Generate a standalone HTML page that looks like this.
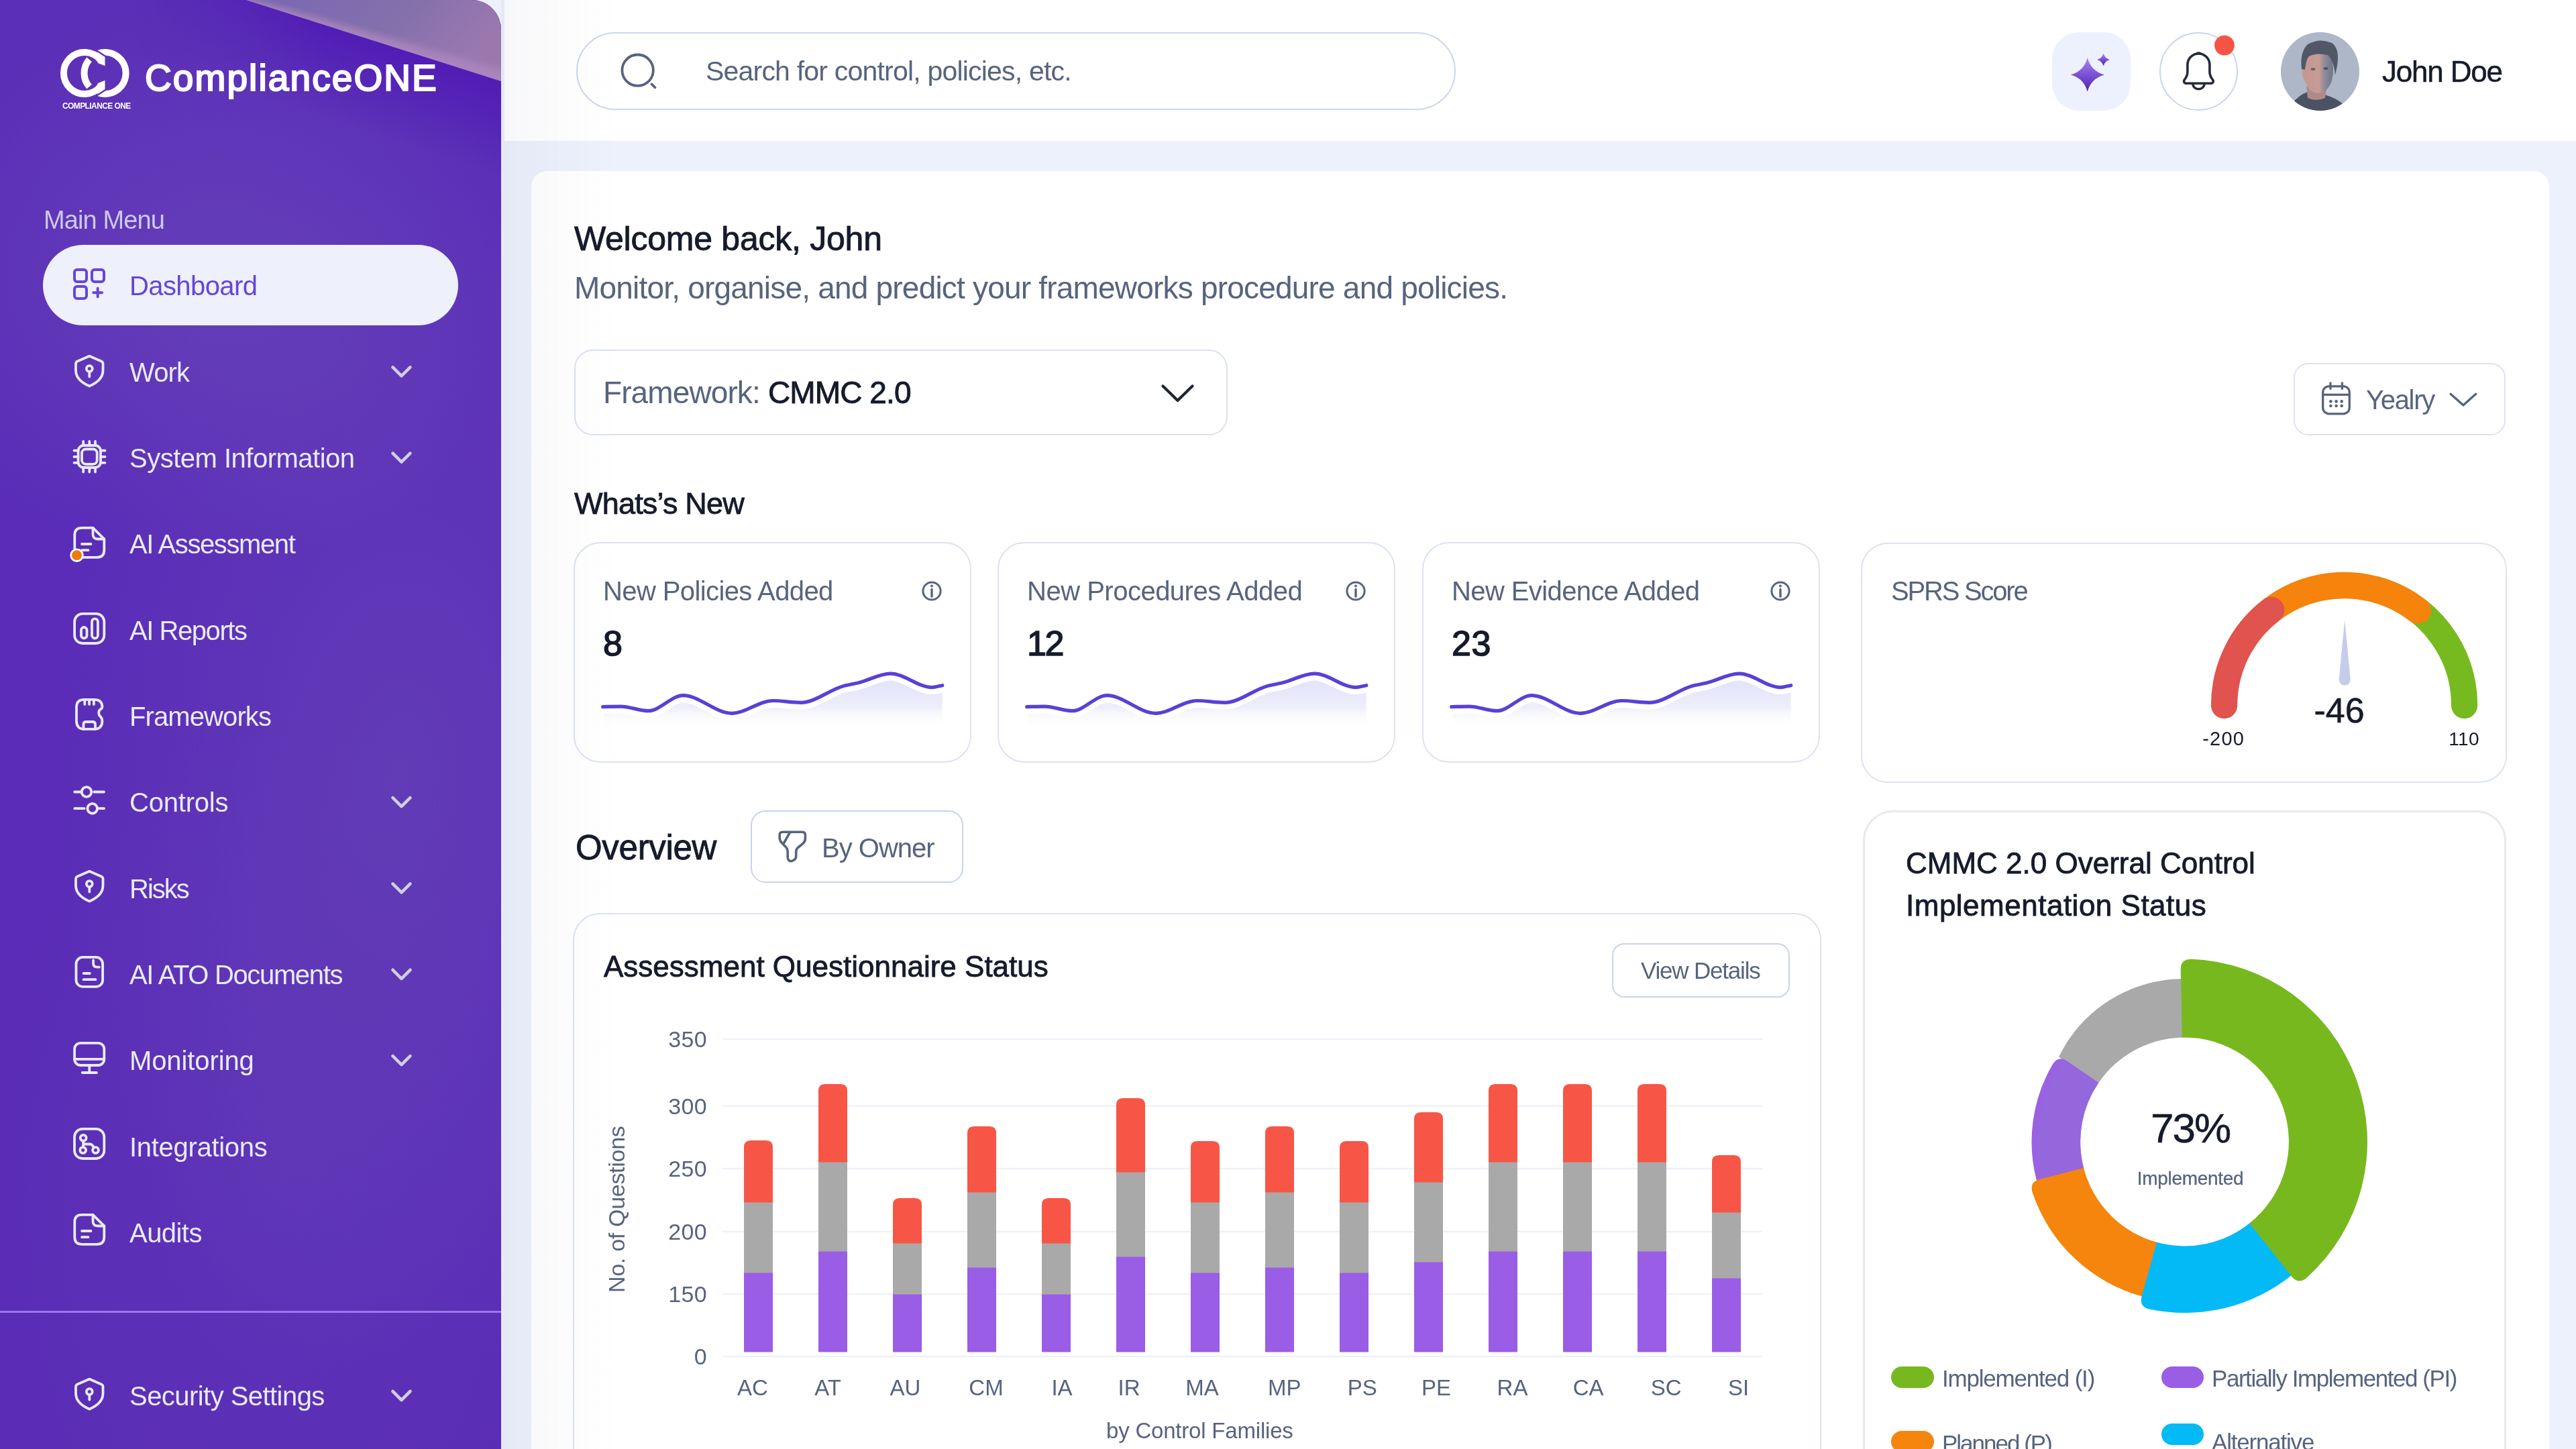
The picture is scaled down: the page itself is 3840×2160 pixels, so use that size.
<!DOCTYPE html>
<html><head><meta charset="utf-8"><title>ComplianceONE Dashboard</title>
<style>
html,body{margin:0;padding:0;}
body{width:3840px;height:2160px;overflow:hidden;position:relative;background:#EDF1FC;font-family:"Liberation Sans",sans-serif;}
.t{position:absolute;line-height:1;white-space:nowrap;font-family:"Liberation Sans",sans-serif;}
svg{font-family:"Liberation Sans",sans-serif;}
</style></head><body>
<div style="position:absolute;left:0;top:0;width:3840px;height:2160px;will-change:transform;">
<div style="position:absolute;left:752px;top:0px;width:3088px;height:210px;background:#FFFFFF;border-bottom:2.5px solid #F0F1F6;"></div>
<div style="position:absolute;left:859px;top:48px;width:1311px;height:116px;box-sizing:border-box;border:2.5px solid #CED6EC;border-radius:58px;background:#fff;"></div>
<svg style="position:absolute;left:0px;top:0px;overflow:visible;" width="3840" height="2160" viewBox="0 0 3840 2160"><circle cx="950.6" cy="104.7" r="23.2" fill="none" stroke="#57647E" stroke-width="3.8"/><path d="M971.5 125.5 L976.5 130.5" stroke="#57647E" stroke-width="3.8" stroke-linecap="round"/></svg>
<div class="t" style="left:1052.0px;top:86.3px;font-size:41px;color:#57647E;letter-spacing:-0.8px;">Search for control, policies, etc.</div>
<div style="position:absolute;left:3059px;top:48px;width:117px;height:117px;background:#EDF1FD;border-radius:40px;"></div>
<svg style="position:absolute;left:0px;top:0px;overflow:visible;" width="3840" height="2160" viewBox="0 0 3840 2160"><defs><linearGradient id="stg" x1="0" y1="0" x2="0" y2="1"><stop offset="0" stop-color="#A985F0"/><stop offset="0.45" stop-color="#7E57DA"/><stop offset="1" stop-color="#5420AE"/></linearGradient></defs>
<path d="M3111.7 86 Q3117 106 3137.3 111.6 Q3117 117 3111.7 136.7 Q3106.5 117 3086.7 111.6 Q3106.5 106 3111.7 86 Z" fill="url(#stg)"/>
<path d="M3135.6 79.6 Q3137.6 87 3145 88.9 Q3137.6 91 3135.6 98.2 Q3133.6 91 3126 88.9 Q3133.6 87 3135.6 79.6 Z" fill="url(#stg)"/></svg>
<div style="position:absolute;left:3219px;top:48px;width:117px;height:117px;box-sizing:border-box;border:2.5px solid #CAD4EC;border-radius:50%;background:#fff;"></div>
<svg style="position:absolute;left:0px;top:0px;overflow:visible;" width="3840" height="2160" viewBox="0 0 3840 2160"><g transform="translate(3277.4 77)" fill="none" stroke="#262B38" stroke-width="3.6" stroke-linejoin="round" stroke-linecap="round"><path d="M -16.5 19.5 A 16.5 16.5 0 0 1 16.5 19.5 L 16.5 30 C 16.5 35.5 18 38 20.8 41.5 C 23 44.5 21.5 47.3 17.5 47.3 L -17.5 47.3 C -21.5 47.3 -23 44.5 -20.8 41.5 C -18 38 -16.5 35.5 -16.5 30 Z"/><path d="M -8.5 49.5 A 8.8 8.5 0 0 0 8.5 49.5"/><path d="M -2.5 2.8 Q 0 1.2 2.5 2.8"/></g><circle cx="3315.9" cy="67.6" r="14.9" fill="#F55343"/></svg>
<svg style="position:absolute;left:0px;top:0px;overflow:visible;" width="3840" height="2160" viewBox="0 0 3840 2160"><defs><clipPath id="avc"><circle cx="3458.5" cy="106.4" r="58.5"/></clipPath>
<linearGradient id="fg" x1="3436" y1="0" x2="3478" y2="0" gradientUnits="userSpaceOnUse"><stop offset="0" stop-color="#C49891"/><stop offset="0.5" stop-color="#C79C94"/><stop offset="0.7" stop-color="#8E8A9A"/><stop offset="1" stop-color="#6E7688"/></linearGradient></defs>
<g clip-path="url(#avc)">
<rect x="3398" y="46" width="122" height="122" fill="#ADB7C8"/>
<path d="M3418 153 Q3428 141 3440 137 L3452 136 L3468 142 Q3482 146 3494 156 L3500 170 L3410 170 Z" fill="#4A5264"/>
<path d="M3438 128 L3440 146 Q3452 152 3466 146 L3468 134 Z" fill="#B08A8A"/>
<path d="M3433 100 Q3430 80 3446 76 Q3468 72 3476 86 Q3480 104 3476 120 Q3470 138 3456 139 Q3442 138 3438 124 Q3432 118 3432 108 Z" fill="url(#fg)"/>
<ellipse cx="3448" cy="103" rx="3.5" ry="2" fill="#6A6676"/>
<ellipse cx="3467" cy="102" rx="3.5" ry="2" fill="#4C5262"/>
<path d="M3431 103 Q3428 78 3440 66 Q3458 56 3476 64 Q3488 72 3484 98 L3481 112 Q3479 90 3470 82 Q3452 78 3442 84 Q3437 90 3436 104 Z" fill="#505868"/>
</g></svg>
<div class="t" style="left:3551.0px;top:84.8px;font-size:44px;color:#161B2B;letter-spacing:-1.2px;-webkit-text-stroke:0.5px #161B2B;">John Doe</div>
<div style="position:absolute;left:792px;top:255px;width:3008px;height:2000px;background:#FFFFFF;border-radius:23px;"></div>
<div class="t" style="left:856.0px;top:330.7px;font-size:50px;color:#161B2B;letter-spacing:-0.25px;-webkit-text-stroke:0.9px #161B2B;">Welcome back, John</div>
<div class="t" style="left:856.0px;top:406.1px;font-size:46px;color:#57647E;letter-spacing:-0.8px;">Monitor, organise, and predict your frameworks procedure and policies.</div>
<div style="position:absolute;left:856px;top:520.5px;width:974px;height:128px;box-sizing:border-box;border:2.5px solid #DCE2F1;border-radius:28px;background:#fff;"></div>
<div class="t" style="left:899.0px;top:562.1px;font-size:46px;color:#57647E;letter-spacing:-0.9px;">Framework:</div>
<div class="t" style="left:1145.0px;top:562.1px;font-size:46px;color:#161B2B;letter-spacing:-0.9px;-webkit-text-stroke:0.9px #161B2B;">CMMC 2.0</div>
<svg style="position:absolute;left:0px;top:0px;overflow:visible;" width="3840" height="2160" viewBox="0 0 3840 2160"><path d="M1733.5 575.5 L1755.5 597 L1777.5 575.5" fill="none" stroke="#1D2433" stroke-width="4.2" stroke-linecap="round" stroke-linejoin="round"/></svg>
<div style="position:absolute;left:3419px;top:541px;width:316px;height:108px;box-sizing:border-box;border:2.5px solid #DCE2F1;border-radius:22px;background:#fff;"></div>
<svg style="position:absolute;left:0px;top:0px;overflow:visible;" width="3840" height="2160" viewBox="0 0 3840 2160"><g fill="none" stroke="#57647E" stroke-width="3.3" stroke-linecap="round"><rect x="3462.7" y="575.8" width="39.6" height="41" rx="9"/><path d="M3462.7 588.3 H3502.3 M3474 571 V579.5 M3491.4 571 V579.5"/></g><circle cx="3474.4" cy="598.4" r="2.3" fill="#57647E"/><circle cx="3474.4" cy="605.0" r="2.3" fill="#57647E"/><circle cx="3482.6" cy="598.4" r="2.3" fill="#57647E"/><circle cx="3482.6" cy="605.0" r="2.3" fill="#57647E"/><circle cx="3490.7" cy="598.4" r="2.3" fill="#57647E"/><circle cx="3490.7" cy="605.0" r="2.3" fill="#57647E"/><path d="M3653 587.3 L3672 604.1 L3690.7 587.3" fill="none" stroke="#57647E" stroke-width="3.4" stroke-linecap="round" stroke-linejoin="round"/></svg>
<div class="t" style="left:3527.0px;top:575.6px;font-size:40px;color:#57647E;letter-spacing:-1.3px;">Yealry</div>
<div class="t" style="left:856.0px;top:727.9px;font-size:45px;color:#161B2B;letter-spacing:-0.8px;-webkit-text-stroke:0.85px #161B2B;">Whats’s New</div>
<div style="position:absolute;left:855px;top:808px;width:593px;height:329px;box-sizing:border-box;border:2.5px solid #DCE2F1;border-radius:40px;background:#fff;"></div>
<div class="t" style="left:899.0px;top:861.1px;font-size:40px;color:#57647E;letter-spacing:-0.6px;">New Policies Added</div>
<div class="t" style="left:899.0px;top:933.0px;font-size:52px;color:#161B2B;letter-spacing:-2.5px;-webkit-text-stroke:1.5px #161B2B;">8</div>
<svg style="position:absolute;left:0px;top:0px;overflow:visible;" width="3840" height="2160" viewBox="0 0 3840 2160"><defs><linearGradient id="ag1" x1="0" y1="0" x2="0" y2="1"><stop offset="0" stop-color="#E3E3FA"/><stop offset="0.55" stop-color="#EDEDFB"/><stop offset="1" stop-color="#FFFFFF" stop-opacity="0"/></linearGradient>
<clipPath id="ac1"><rect x="900.7" y="958" width="504.0999999999999" height="140"/></clipPath></defs>
<g clip-path="url(#ac1)"><path d="M898.7 1063.6 C907.6 1063.4 916.4 1063.1 925.3 1063.1 C939.0 1063.1 952.7 1069.7 966.4 1069.7 C983.7 1069.7 1001.0 1046.7 1018.3 1046.7 C1042.5 1046.7 1066.6 1073.3 1090.8 1073.3 C1111.3 1073.3 1131.8 1054.5 1152.3 1054.5 C1166.0 1054.5 1179.7 1057.4 1193.4 1057.4 C1215.1 1057.4 1236.9 1037.7 1258.6 1032.2 C1265.4 1030.5 1272.2 1029.6 1279.0 1028.0 C1295.2 1024.2 1311.3 1014.1 1327.5 1014.1 C1348.0 1014.1 1368.6 1034.6 1389.1 1034.6 C1394.3 1034.6 1399.6 1032.7 1404.8 1031.7 L1404.8 1085 L900.7 1085 Z" fill="url(#ag1)" transform="translate(0 0)"/></g>
<path d="M898.7 1053.6 C907.6 1053.4 916.4 1053.1 925.3 1053.1 C939.0 1053.1 952.7 1059.7 966.4 1059.7 C983.7 1059.7 1001.0 1036.7 1018.3 1036.7 C1042.5 1036.7 1066.6 1063.3 1090.8 1063.3 C1111.3 1063.3 1131.8 1044.5 1152.3 1044.5 C1166.0 1044.5 1179.7 1047.4 1193.4 1047.4 C1215.1 1047.4 1236.9 1027.7 1258.6 1022.2 C1265.4 1020.5 1272.2 1019.6 1279.0 1018.0 C1295.2 1014.2 1311.3 1004.1 1327.5 1004.1 C1348.0 1004.1 1368.6 1024.6 1389.1 1024.6 C1394.3 1024.6 1399.6 1022.7 1404.8 1021.7" fill="none" stroke="#FFFFFF" stroke-width="13" stroke-linecap="round" transform="translate(0 4)"/>
<path d="M898.7 1053.6 C907.6 1053.4 916.4 1053.1 925.3 1053.1 C939.0 1053.1 952.7 1059.7 966.4 1059.7 C983.7 1059.7 1001.0 1036.7 1018.3 1036.7 C1042.5 1036.7 1066.6 1063.3 1090.8 1063.3 C1111.3 1063.3 1131.8 1044.5 1152.3 1044.5 C1166.0 1044.5 1179.7 1047.4 1193.4 1047.4 C1215.1 1047.4 1236.9 1027.7 1258.6 1022.2 C1265.4 1020.5 1272.2 1019.6 1279.0 1018.0 C1295.2 1014.2 1311.3 1004.1 1327.5 1004.1 C1348.0 1004.1 1368.6 1024.6 1389.1 1024.6 C1394.3 1024.6 1399.6 1022.7 1404.8 1021.7" fill="none" stroke="#5B3FD8" stroke-width="5.2" stroke-linecap="round"/>
<circle cx="1389" cy="881" r="13.1" fill="none" stroke="#57647E" stroke-width="3"/><circle cx="1389" cy="873.6" r="2" fill="#57647E"/><path d="M1389 878.5 V889.2" stroke="#57647E" stroke-width="3.4" stroke-linecap="round"/></svg>
<div style="position:absolute;left:1487px;top:808px;width:593px;height:329px;box-sizing:border-box;border:2.5px solid #DCE2F1;border-radius:40px;background:#fff;"></div>
<div class="t" style="left:1531.0px;top:861.1px;font-size:40px;color:#57647E;letter-spacing:-0.5px;">New Procedures Added</div>
<div class="t" style="left:1531.0px;top:933.0px;font-size:52px;color:#161B2B;letter-spacing:-2.5px;-webkit-text-stroke:1.5px #161B2B;">12</div>
<svg style="position:absolute;left:0px;top:0px;overflow:visible;" width="3840" height="2160" viewBox="0 0 3840 2160"><defs><linearGradient id="ag2" x1="0" y1="0" x2="0" y2="1"><stop offset="0" stop-color="#E3E3FA"/><stop offset="0.55" stop-color="#EDEDFB"/><stop offset="1" stop-color="#FFFFFF" stop-opacity="0"/></linearGradient>
<clipPath id="ac2"><rect x="1532.7" y="958" width="504.0999999999999" height="140"/></clipPath></defs>
<g clip-path="url(#ac2)"><path d="M1530.7 1063.6 C1539.6 1063.4 1548.4 1063.1 1557.3 1063.1 C1571.0 1063.1 1584.7 1069.7 1598.4 1069.7 C1615.7 1069.7 1633.0 1046.7 1650.3 1046.7 C1674.5 1046.7 1698.6 1073.3 1722.8 1073.3 C1743.3 1073.3 1763.8 1054.5 1784.3 1054.5 C1798.0 1054.5 1811.7 1057.4 1825.4 1057.4 C1847.1 1057.4 1868.9 1037.7 1890.6 1032.2 C1897.4 1030.5 1904.2 1029.6 1911.0 1028.0 C1927.2 1024.2 1943.3 1014.1 1959.5 1014.1 C1980.0 1014.1 2000.6 1034.6 2021.1 1034.6 C2026.3 1034.6 2031.6 1032.7 2036.8 1031.7 L2036.8 1085 L1532.7 1085 Z" fill="url(#ag2)" transform="translate(0 0)"/></g>
<path d="M1530.7 1053.6 C1539.6 1053.4 1548.4 1053.1 1557.3 1053.1 C1571.0 1053.1 1584.7 1059.7 1598.4 1059.7 C1615.7 1059.7 1633.0 1036.7 1650.3 1036.7 C1674.5 1036.7 1698.6 1063.3 1722.8 1063.3 C1743.3 1063.3 1763.8 1044.5 1784.3 1044.5 C1798.0 1044.5 1811.7 1047.4 1825.4 1047.4 C1847.1 1047.4 1868.9 1027.7 1890.6 1022.2 C1897.4 1020.5 1904.2 1019.6 1911.0 1018.0 C1927.2 1014.2 1943.3 1004.1 1959.5 1004.1 C1980.0 1004.1 2000.6 1024.6 2021.1 1024.6 C2026.3 1024.6 2031.6 1022.7 2036.8 1021.7" fill="none" stroke="#FFFFFF" stroke-width="13" stroke-linecap="round" transform="translate(0 4)"/>
<path d="M1530.7 1053.6 C1539.6 1053.4 1548.4 1053.1 1557.3 1053.1 C1571.0 1053.1 1584.7 1059.7 1598.4 1059.7 C1615.7 1059.7 1633.0 1036.7 1650.3 1036.7 C1674.5 1036.7 1698.6 1063.3 1722.8 1063.3 C1743.3 1063.3 1763.8 1044.5 1784.3 1044.5 C1798.0 1044.5 1811.7 1047.4 1825.4 1047.4 C1847.1 1047.4 1868.9 1027.7 1890.6 1022.2 C1897.4 1020.5 1904.2 1019.6 1911.0 1018.0 C1927.2 1014.2 1943.3 1004.1 1959.5 1004.1 C1980.0 1004.1 2000.6 1024.6 2021.1 1024.6 C2026.3 1024.6 2031.6 1022.7 2036.8 1021.7" fill="none" stroke="#5B3FD8" stroke-width="5.2" stroke-linecap="round"/>
<circle cx="2021" cy="881" r="13.1" fill="none" stroke="#57647E" stroke-width="3"/><circle cx="2021" cy="873.6" r="2" fill="#57647E"/><path d="M2021 878.5 V889.2" stroke="#57647E" stroke-width="3.4" stroke-linecap="round"/></svg>
<div style="position:absolute;left:2120px;top:808px;width:593px;height:329px;box-sizing:border-box;border:2.5px solid #DCE2F1;border-radius:40px;background:#fff;"></div>
<div class="t" style="left:2164.0px;top:861.1px;font-size:40px;color:#57647E;letter-spacing:-0.6px;">New Evidence Added</div>
<div class="t" style="left:2164.0px;top:933.0px;font-size:52px;color:#161B2B;letter-spacing:0.5px;-webkit-text-stroke:1.5px #161B2B;">23</div>
<svg style="position:absolute;left:0px;top:0px;overflow:visible;" width="3840" height="2160" viewBox="0 0 3840 2160"><defs><linearGradient id="ag3" x1="0" y1="0" x2="0" y2="1"><stop offset="0" stop-color="#E3E3FA"/><stop offset="0.55" stop-color="#EDEDFB"/><stop offset="1" stop-color="#FFFFFF" stop-opacity="0"/></linearGradient>
<clipPath id="ac3"><rect x="2165.7" y="958" width="504.10000000000036" height="140"/></clipPath></defs>
<g clip-path="url(#ac3)"><path d="M2163.7 1063.6 C2172.6 1063.4 2181.4 1063.1 2190.3 1063.1 C2204.0 1063.1 2217.7 1069.7 2231.4 1069.7 C2248.7 1069.7 2266.0 1046.7 2283.3 1046.7 C2307.5 1046.7 2331.6 1073.3 2355.8 1073.3 C2376.3 1073.3 2396.8 1054.5 2417.3 1054.5 C2431.0 1054.5 2444.7 1057.4 2458.4 1057.4 C2480.1 1057.4 2501.9 1037.7 2523.6 1032.2 C2530.4 1030.5 2537.2 1029.6 2544.0 1028.0 C2560.2 1024.2 2576.3 1014.1 2592.5 1014.1 C2613.0 1014.1 2633.6 1034.6 2654.1 1034.6 C2659.3 1034.6 2664.6 1032.7 2669.8 1031.7 L2669.8 1085 L2165.7 1085 Z" fill="url(#ag3)" transform="translate(0 0)"/></g>
<path d="M2163.7 1053.6 C2172.6 1053.4 2181.4 1053.1 2190.3 1053.1 C2204.0 1053.1 2217.7 1059.7 2231.4 1059.7 C2248.7 1059.7 2266.0 1036.7 2283.3 1036.7 C2307.5 1036.7 2331.6 1063.3 2355.8 1063.3 C2376.3 1063.3 2396.8 1044.5 2417.3 1044.5 C2431.0 1044.5 2444.7 1047.4 2458.4 1047.4 C2480.1 1047.4 2501.9 1027.7 2523.6 1022.2 C2530.4 1020.5 2537.2 1019.6 2544.0 1018.0 C2560.2 1014.2 2576.3 1004.1 2592.5 1004.1 C2613.0 1004.1 2633.6 1024.6 2654.1 1024.6 C2659.3 1024.6 2664.6 1022.7 2669.8 1021.7" fill="none" stroke="#FFFFFF" stroke-width="13" stroke-linecap="round" transform="translate(0 4)"/>
<path d="M2163.7 1053.6 C2172.6 1053.4 2181.4 1053.1 2190.3 1053.1 C2204.0 1053.1 2217.7 1059.7 2231.4 1059.7 C2248.7 1059.7 2266.0 1036.7 2283.3 1036.7 C2307.5 1036.7 2331.6 1063.3 2355.8 1063.3 C2376.3 1063.3 2396.8 1044.5 2417.3 1044.5 C2431.0 1044.5 2444.7 1047.4 2458.4 1047.4 C2480.1 1047.4 2501.9 1027.7 2523.6 1022.2 C2530.4 1020.5 2537.2 1019.6 2544.0 1018.0 C2560.2 1014.2 2576.3 1004.1 2592.5 1004.1 C2613.0 1004.1 2633.6 1024.6 2654.1 1024.6 C2659.3 1024.6 2664.6 1022.7 2669.8 1021.7" fill="none" stroke="#5B3FD8" stroke-width="5.2" stroke-linecap="round"/>
<circle cx="2654" cy="881" r="13.1" fill="none" stroke="#57647E" stroke-width="3"/><circle cx="2654" cy="873.6" r="2" fill="#57647E"/><path d="M2654 878.5 V889.2" stroke="#57647E" stroke-width="3.4" stroke-linecap="round"/></svg>
<div style="position:absolute;left:2774px;top:809px;width:963px;height:358px;box-sizing:border-box;border:2.5px solid #DCE2F1;border-radius:40px;background:#fff;"></div>
<div class="t" style="left:2819.0px;top:861.1px;font-size:40px;color:#57647E;letter-spacing:-2.2px;">SPRS Score</div>
<svg style="position:absolute;left:0px;top:0px;overflow:visible;" width="3840" height="2160" viewBox="0 0 3840 2160"><g fill="none" stroke-width="39.3" stroke-linecap="round">
<path d="M3540.9 878.6 A179 179 0 0 1 3673.6 1051.5" stroke="#77BA1F"/>
<path d="M3339.6 962.0 A179 179 0 0 1 3604.3 910.1" stroke="#F5830C"/>
<path d="M3315.6 1051.5 A179 179 0 0 1 3385.6 909.5" stroke="#E0534F"/></g>
<path d="M3495.2 924 L3503.6 1011 Q3504.2 1021.5 3495.2 1021.5 Q3486.2 1021.5 3486.8 1011 Z" fill="#C6CCEC"/></svg>
<div class="t" style="left:3487.0px;top:1033.0px;font-size:52px;color:#161B2B;-webkit-text-stroke:0.6px #161B2B;transform:translateX(-50%);">-46</div>
<div class="t" style="left:3314.7px;top:1087.0px;font-size:29px;color:#161B2B;letter-spacing:1.2px;transform:translateX(-50%);">-200</div>
<div class="t" style="left:3673.0px;top:1087.8px;font-size:28px;color:#161B2B;letter-spacing:0.3px;transform:translateX(-50%);">110</div>
<div class="t" style="left:858.0px;top:1237.8px;font-size:51px;color:#161B2B;letter-spacing:-0.3px;-webkit-text-stroke:0.9px #161B2B;">Overview</div>
<div style="position:absolute;left:1119px;top:1208px;width:317px;height:108px;box-sizing:border-box;border:2.5px solid #CAD3EB;border-radius:22px;background:#fff;"></div>
<svg style="position:absolute;left:0px;top:0px;overflow:visible;" width="3840" height="2160" viewBox="0 0 3840 2160"><g fill="none" stroke="#57647E" stroke-width="3.6" stroke-linejoin="round" stroke-linecap="round"><path d="M1166.5 1240.2 L1196 1240.2 Q1200.4 1240.2 1200.4 1244.6 L1200.4 1250 Q1200.4 1254.5 1197 1257.3 L1189.5 1263.5 Q1186.7 1266 1186.7 1269.5 L1186.7 1276.5 Q1186.7 1280.5 1182.5 1282.6 Q1178 1284.8 1175.8 1282.5 Q1174.2 1280.8 1174.2 1277.5 L1174.2 1269 Q1174.2 1265.5 1171.8 1263 L1165 1256 Q1162.2 1253 1162.2 1249 L1162.2 1244.5 Q1162.2 1240.2 1166.5 1240.2 Z"/><path d="M1177.5 1240.8 L1168.6 1256.5"/></g></svg>
<div class="t" style="left:1225.0px;top:1244.1px;font-size:40px;color:#57647E;letter-spacing:-1.0px;">By Owner</div>
<div style="position:absolute;left:854px;top:1361px;width:1861px;height:900px;box-sizing:border-box;border:2.5px solid #DCE2F1;border-radius:40px;background:#fff;"></div>
<div class="t" style="left:900.0px;top:1418.8px;font-size:44px;color:#161B2B;-webkit-text-stroke:0.85px #161B2B;">Assessment Questionnaire Status</div>
<div style="position:absolute;left:2403px;top:1406px;width:265px;height:81px;box-sizing:border-box;border:2.5px solid #CAD3EB;border-radius:18px;background:#fff;"></div>
<div class="t" style="left:2446.0px;top:1429.4px;font-size:35px;color:#57647E;letter-spacing:-1.2px;">View Details</div>
<svg style="position:absolute;left:0px;top:0px;overflow:visible;" width="3840" height="2160" viewBox="0 0 3840 2160"><rect x="1077" y="1547.75" width="1550" height="2.5" fill="#EFF1F7"/><rect x="1077" y="1647.45" width="1550" height="2.5" fill="#EFF1F7"/><rect x="1077" y="1740.75" width="1550" height="2.5" fill="#EFF1F7"/><rect x="1077" y="1834.75" width="1550" height="2.5" fill="#EFF1F7"/><rect x="1077" y="1927.75" width="1550" height="2.5" fill="#EFF1F7"/><rect x="1077" y="2020.75" width="1550" height="2.5" fill="#EFF1F7"/></svg>
<div class="t" style="left:1054.0px;top:1532.0px;font-size:34px;color:#57647E;letter-spacing:0.3px;transform:translateX(-100%);">350</div>
<div class="t" style="left:1054.0px;top:1631.7px;font-size:34px;color:#57647E;letter-spacing:0.3px;transform:translateX(-100%);">300</div>
<div class="t" style="left:1054.0px;top:1725.0px;font-size:34px;color:#57647E;letter-spacing:0.3px;transform:translateX(-100%);">250</div>
<div class="t" style="left:1054.0px;top:1819.0px;font-size:34px;color:#57647E;letter-spacing:0.3px;transform:translateX(-100%);">200</div>
<div class="t" style="left:1054.0px;top:1912.0px;font-size:34px;color:#57647E;letter-spacing:0.3px;transform:translateX(-100%);">150</div>
<div class="t" style="left:1054.0px;top:2005.0px;font-size:34px;color:#57647E;letter-spacing:0.3px;transform:translateX(-100%);">0</div>
<svg style="position:absolute;left:0px;top:0px;overflow:visible;" width="3840" height="2160" viewBox="0 0 3840 2160"><text transform="translate(931 1927) rotate(-90)" font-family="Liberation Sans" font-size="34" letter-spacing="-0.3" fill="#57647E">No. of Questions</text></svg>
<svg style="position:absolute;left:0px;top:0px;overflow:visible;" width="3840" height="2160" viewBox="0 0 3840 2160"><rect x="1109" y="1897" width="43" height="118.5" fill="#9A5DE5"/><rect x="1109" y="1792" width="43" height="105.5" fill="#A9A9A9"/><path d="M1109 1792.5 L1109 1710 Q1109 1700 1119 1700 L1142 1700 Q1152 1700 1152 1710 L1152 1792.5 Z" fill="#F75646"/><rect x="1220" y="1865" width="43" height="150.5" fill="#9A5DE5"/><rect x="1220" y="1732" width="43" height="133.5" fill="#A9A9A9"/><path d="M1220 1732.5 L1220 1626 Q1220 1616 1230 1616 L1253 1616 Q1263 1616 1263 1626 L1263 1732.5 Z" fill="#F75646"/><rect x="1331" y="1929" width="43" height="86.5" fill="#9A5DE5"/><rect x="1331" y="1853" width="43" height="76.5" fill="#A9A9A9"/><path d="M1331 1853.5 L1331 1796 Q1331 1786 1341 1786 L1364 1786 Q1374 1786 1374 1796 L1374 1853.5 Z" fill="#F75646"/><rect x="1442" y="1889" width="43" height="126.5" fill="#9A5DE5"/><rect x="1442" y="1777" width="43" height="112.5" fill="#A9A9A9"/><path d="M1442 1777.5 L1442 1689 Q1442 1679 1452 1679 L1475 1679 Q1485 1679 1485 1689 L1485 1777.5 Z" fill="#F75646"/><rect x="1553" y="1929" width="43" height="86.5" fill="#9A5DE5"/><rect x="1553" y="1853" width="43" height="76.5" fill="#A9A9A9"/><path d="M1553 1853.5 L1553 1796 Q1553 1786 1563 1786 L1586 1786 Q1596 1786 1596 1796 L1596 1853.5 Z" fill="#F75646"/><rect x="1664" y="1873" width="43" height="142.5" fill="#9A5DE5"/><rect x="1664" y="1747" width="43" height="126.5" fill="#A9A9A9"/><path d="M1664 1747.5 L1664 1647 Q1664 1637 1674 1637 L1697 1637 Q1707 1637 1707 1647 L1707 1747.5 Z" fill="#F75646"/><rect x="1775" y="1897" width="43" height="118.5" fill="#9A5DE5"/><rect x="1775" y="1792" width="43" height="105.5" fill="#A9A9A9"/><path d="M1775 1792.5 L1775 1711 Q1775 1701 1785 1701 L1808 1701 Q1818 1701 1818 1711 L1818 1792.5 Z" fill="#F75646"/><rect x="1886" y="1889" width="43" height="126.5" fill="#9A5DE5"/><rect x="1886" y="1777" width="43" height="112.5" fill="#A9A9A9"/><path d="M1886 1777.5 L1886 1689 Q1886 1679 1896 1679 L1919 1679 Q1929 1679 1929 1689 L1929 1777.5 Z" fill="#F75646"/><rect x="1997" y="1897" width="43" height="118.5" fill="#9A5DE5"/><rect x="1997" y="1792" width="43" height="105.5" fill="#A9A9A9"/><path d="M1997 1792.5 L1997 1711 Q1997 1701 2007 1701 L2030 1701 Q2040 1701 2040 1711 L2040 1792.5 Z" fill="#F75646"/><rect x="2108" y="1881" width="43" height="134.5" fill="#9A5DE5"/><rect x="2108" y="1762" width="43" height="119.5" fill="#A9A9A9"/><path d="M2108 1762.5 L2108 1668 Q2108 1658 2118 1658 L2141 1658 Q2151 1658 2151 1668 L2151 1762.5 Z" fill="#F75646"/><rect x="2219" y="1865" width="43" height="150.5" fill="#9A5DE5"/><rect x="2219" y="1732" width="43" height="133.5" fill="#A9A9A9"/><path d="M2219 1732.5 L2219 1626 Q2219 1616 2229 1616 L2252 1616 Q2262 1616 2262 1626 L2262 1732.5 Z" fill="#F75646"/><rect x="2330" y="1865" width="43" height="150.5" fill="#9A5DE5"/><rect x="2330" y="1732" width="43" height="133.5" fill="#A9A9A9"/><path d="M2330 1732.5 L2330 1626 Q2330 1616 2340 1616 L2363 1616 Q2373 1616 2373 1626 L2373 1732.5 Z" fill="#F75646"/><rect x="2441" y="1865" width="43" height="150.5" fill="#9A5DE5"/><rect x="2441" y="1732" width="43" height="133.5" fill="#A9A9A9"/><path d="M2441 1732.5 L2441 1626 Q2441 1616 2451 1616 L2474 1616 Q2484 1616 2484 1626 L2484 1732.5 Z" fill="#F75646"/><rect x="2552" y="1905" width="43" height="110.5" fill="#9A5DE5"/><rect x="2552" y="1807" width="43" height="98.5" fill="#A9A9A9"/><path d="M2552 1807.5 L2552 1732 Q2552 1722 2562 1722 L2585 1722 Q2595 1722 2595 1732 L2595 1807.5 Z" fill="#F75646"/></svg>
<div class="t" style="left:1122.0px;top:2052.1px;font-size:33px;color:#57647E;transform:translateX(-50%);">AC</div>
<div class="t" style="left:1234.0px;top:2052.1px;font-size:33px;color:#57647E;transform:translateX(-50%);">AT</div>
<div class="t" style="left:1349.5px;top:2052.1px;font-size:33px;color:#57647E;transform:translateX(-50%);">AU</div>
<div class="t" style="left:1470.0px;top:2052.1px;font-size:33px;color:#57647E;transform:translateX(-50%);">CM</div>
<div class="t" style="left:1583.0px;top:2052.1px;font-size:33px;color:#57647E;transform:translateX(-50%);">IA</div>
<div class="t" style="left:1683.0px;top:2052.1px;font-size:33px;color:#57647E;transform:translateX(-50%);">IR</div>
<div class="t" style="left:1792.0px;top:2052.1px;font-size:33px;color:#57647E;transform:translateX(-50%);">MA</div>
<div class="t" style="left:1914.7px;top:2052.1px;font-size:33px;color:#57647E;transform:translateX(-50%);">MP</div>
<div class="t" style="left:2030.7px;top:2052.1px;font-size:33px;color:#57647E;transform:translateX(-50%);">PS</div>
<div class="t" style="left:2141.0px;top:2052.1px;font-size:33px;color:#57647E;transform:translateX(-50%);">PE</div>
<div class="t" style="left:2254.5px;top:2052.1px;font-size:33px;color:#57647E;transform:translateX(-50%);">RA</div>
<div class="t" style="left:2367.7px;top:2052.1px;font-size:33px;color:#57647E;transform:translateX(-50%);">CA</div>
<div class="t" style="left:2483.7px;top:2052.1px;font-size:33px;color:#57647E;transform:translateX(-50%);">SC</div>
<div class="t" style="left:2591.5px;top:2052.1px;font-size:33px;color:#57647E;transform:translateX(-50%);">SI</div>
<div class="t" style="left:1649.0px;top:2116.1px;font-size:33px;color:#57647E;letter-spacing:-0.2px;">by Control Families</div>
<div style="position:absolute;left:2777px;top:1208px;width:959px;height:1000px;box-sizing:border-box;border:3px solid #E7E9EF;border-radius:45px;background:#fff;"></div>
<div class="t" style="left:2841.0px;top:1264.8px;font-size:44px;color:#161B2B;-webkit-text-stroke:0.85px #161B2B;">CMMC 2.0 Overral Control</div>
<div class="t" style="left:2841.0px;top:1327.8px;font-size:44px;color:#161B2B;letter-spacing:0.5px;-webkit-text-stroke:0.85px #161B2B;">Implementation Status</div>
<svg style="position:absolute;left:0px;top:0px;overflow:visible;" width="3840" height="2160" viewBox="0 0 3840 2160"><path d="M3069.1 1575.6 L3070.9 1572.0 L3072.7 1568.5 L3074.6 1564.9 L3076.6 1561.4 L3078.6 1557.9 L3080.7 1554.5 L3082.9 1551.1 L3085.2 1547.8 L3087.5 1544.4 L3090.0 1541.2 L3092.4 1537.9 L3095.0 1534.7 L3097.6 1531.6 L3100.3 1528.5 L3103.1 1525.5 L3105.9 1522.5 L3108.8 1519.6 L3111.7 1516.7 L3114.7 1513.9 L3117.8 1511.1 L3120.9 1508.4 L3124.1 1505.7 L3127.4 1503.2 L3130.7 1500.6 L3134.0 1498.2 L3137.4 1495.8 L3140.9 1493.5 L3144.4 1491.2 L3148.0 1489.0 L3151.6 1486.9 L3155.2 1484.8 L3158.9 1482.9 L3162.7 1481.0 L3166.5 1479.1 L3170.3 1477.4 L3174.1 1475.7 L3178.0 1474.1 L3182.0 1472.6 L3185.9 1471.1 L3189.9 1469.7 L3193.9 1468.5 L3198.0 1467.2 L3202.0 1466.1 L3206.1 1465.1 L3210.3 1464.1 L3214.4 1463.2 L3218.6 1462.4 L3222.7 1461.7 L3226.9 1461.1 L3231.1 1460.5 L3235.3 1460.1 L3239.6 1459.7 L3243.8 1459.4 L3248.0 1459.2 L3252.3 1459.0 L3256.5 1459.0 L3256.5 1546.6 L3253.8 1546.6 L3251.1 1546.7 L3248.4 1546.8 L3245.7 1547.0 L3243.0 1547.2 L3240.3 1547.5 L3237.6 1547.8 L3234.9 1548.1 L3232.2 1548.5 L3229.5 1549.0 L3226.8 1549.5 L3224.2 1550.0 L3221.5 1550.6 L3218.9 1551.2 L3216.3 1551.9 L3213.7 1552.6 L3211.1 1553.4 L3208.5 1554.2 L3205.9 1555.1 L3203.4 1556.0 L3200.8 1556.9 L3198.3 1557.9 L3195.8 1559.0 L3193.3 1560.0 L3190.8 1561.2 L3188.4 1562.3 L3185.9 1563.5 L3183.5 1564.8 L3181.2 1566.1 L3178.8 1567.4 L3176.5 1568.8 L3174.2 1570.2 L3171.9 1571.7 L3169.6 1573.2 L3167.4 1574.7 L3165.2 1576.3 L3163.0 1577.9 L3160.8 1579.5 L3158.7 1581.2 L3156.6 1583.0 L3154.5 1584.7 L3152.5 1586.5 L3150.5 1588.3 L3148.6 1590.2 L3146.6 1592.1 L3144.7 1594.1 L3142.8 1596.0 L3141.0 1598.0 L3139.2 1600.0 L3137.5 1602.1 L3135.7 1604.2 L3134.0 1606.3 L3132.4 1608.5 L3130.8 1610.7 L3129.2 1612.9 L3127.7 1615.1 Z" fill="#A9A9A9"/><path d="M3106.40 1742.22 L3036.27 1761.01 A228 228 0 0 1 3060.01 1586.35 Q3068.60 1572.86 3081.79 1581.92 L3128.43 1613.98 A155.4 155.4 0 0 0 3106.40 1742.22 Z" fill="#9A62E2"/><path d="M3105.85 1740.12 L3044.19 1755.72 A219 219 0 0 1 3068.95 1588.93 Q3074.30 1580.49 3082.62 1586.04 L3127.21 1615.78 A155.4 155.4 0 0 0 3105.85 1740.12 Z" fill="#9467DC"/><path d="M3216.28 1852.10 L3194.64 1932.86 A239 239 0 0 1 3029.63 1777.19 Q3025.11 1761.84 3040.60 1757.83 L3106.05 1740.91 A155.4 155.4 0 0 0 3216.28 1852.10 Z" fill="#F5850D"/><path d="M3354.30 1822.77 L3416.98 1900.17 A255 255 0 0 1 3203.90 1951.52 Q3188.35 1947.73 3192.63 1932.31 L3214.97 1851.75 A155.4 155.4 0 0 0 3354.30 1822.77 Z" fill="#03BAF6"/><path d="M3252.97 1546.64 L3250.68 1445.57 Q3250.32 1429.57 3266.32 1429.68 A272.5 272.5 0 0 1 3438.36 1904.94 Q3426.14 1915.26 3416.18 1902.74 L3353.24 1823.62 A155.4 155.4 0 0 0 3252.97 1546.64 Z" fill="#78B81F"/></svg>
<div class="t" style="left:3265.0px;top:1650.5px;font-size:62px;color:#161B2B;letter-spacing:-2px;-webkit-text-stroke:0.5px #161B2B;transform:translateX(-50%);">73%</div>
<div class="t" style="left:3265.0px;top:1743.3px;font-size:28px;color:#57647E;letter-spacing:-0.3px;-webkit-text-stroke:0.3px #57647E;transform:translateX(-50%);">Implemented</div>
<div style="position:absolute;left:2819px;top:2037px;width:63.5px;height:32px;background:#78B81F;border-radius:16px;"></div>
<div style="position:absolute;left:3221.5px;top:2037px;width:63.5px;height:32px;background:#9A5DE5;border-radius:16px;"></div>
<div style="position:absolute;left:2819px;top:2133px;width:63.5px;height:32px;background:#F5850D;border-radius:16px;"></div>
<div style="position:absolute;left:3221.5px;top:2122.4px;width:63.5px;height:32px;background:#03BAF6;border-radius:16px;"></div>
<div class="t" style="left:2895.0px;top:2037.4px;font-size:35px;color:#57647E;letter-spacing:-1.2px;">Implemented (I)</div>
<div class="t" style="left:3297.0px;top:2037.4px;font-size:35px;color:#57647E;letter-spacing:-1.45px;">Partially Implemented (PI)</div>
<div class="t" style="left:2895.0px;top:2134.4px;font-size:35px;color:#57647E;letter-spacing:-2.0px;">Planned (P)</div>
<div class="t" style="left:3297.0px;top:2131.9px;font-size:35px;color:#57647E;letter-spacing:-1.2px;">Alternative</div>
<div style="position:absolute;left:0;top:0;width:747px;height:2160px;border-top-right-radius:44px;overflow:hidden;
background:
radial-gradient(ellipse 520px 900px at 600px 1150px, rgba(112,90,180,0.32), rgba(112,90,180,0) 100%),
radial-gradient(ellipse 500px 420px at 330px 420px, rgba(112,84,186,0.45), rgba(112,84,186,0) 100%),
radial-gradient(ellipse 420px 700px at 420px 1750px, rgba(105,78,182,0.2), rgba(105,78,182,0) 100%),
linear-gradient(180deg,#5B2FB7 0%,#5A2CB8 40%,#5B2DB6 100%);">
<svg width="747" height="400" style="position:absolute;left:0;top:0">
<defs><linearGradient id="ov" x1="0" y1="0" x2="1" y2="0.3">
<stop offset="0" stop-color="#7A66B2"/><stop offset="0.6" stop-color="#8470AC"/><stop offset="1" stop-color="#9A78AE"/></linearGradient>
<linearGradient id="dk" gradientUnits="userSpaceOnUse" x1="557" y1="61" x2="517" y2="186"><stop offset="0" stop-color="#4A12B4" stop-opacity="0.6"/><stop offset="1" stop-color="#4A12B4" stop-opacity="0"/></linearGradient><linearGradient id="hf" gradientUnits="userSpaceOnUse" x1="200" y1="0" x2="480" y2="0"><stop offset="0" stop-color="#000"/><stop offset="1" stop-color="#fff"/></linearGradient><mask id="mk"><rect x="0" y="0" width="747" height="400" fill="url(#hf)"/></mask>
<linearGradient id="ovl" gradientUnits="userSpaceOnUse" x1="557" y1="61" x2="562" y2="43"><stop offset="0" stop-color="#A886BE" stop-opacity="0.95"/><stop offset="0.35" stop-color="#A884BA" stop-opacity="0.8"/><stop offset="1" stop-color="#9A7EB8" stop-opacity="0"/></linearGradient></defs>
<rect x="0" y="0" width="747" height="400" fill="url(#dk)" mask="url(#mk)"/>
<path d="M367 0 L747 0 L747 121 Z" fill="url(#ov)"/>
<path d="M367 0 L747 121 L747 90 L440 0 Z" fill="url(#ovl)"/>
</svg>
</div>
<svg style="position:absolute;left:0px;top:0px;overflow:visible;" width="250" height="200" viewBox="0 0 250 200">
<g fill="none" stroke="#FFFFFF" stroke-width="10">
<path d="M 149.7 89.1 A 31 31 0 1 0 149.7 128.9"/>
<path d="M 145.9 79.9 A 31 31 0 1 1 145.9 138.1"/>
<path d="M 133.1 88.7 A 31 31 0 0 0 133.1 129.3"/>
</g>
<path d="M 140.5 82 L 156.5 83.5 L 156.5 98.3 L 146 94 Z" fill="#FFFFFF"/>
<path d="M 140.5 136 L 156.5 134.5 L 156.5 119.7 L 146 124 Z" fill="#FFFFFF"/>
<path d="M 143.5 75 L 158 84.5 M 143.5 143 L 158 133.5" stroke="#5C30B6" stroke-width="2.2"/>
</svg>
<div class="t" style="left:93.0px;top:152.2px;font-size:12px;color:#FFFFFF;letter-spacing:-0.6px;font-weight:700;">COMPLIANCE ONE</div>
<div class="t" style="left:216.0px;top:89.4px;font-size:55px;color:#FFFFFF;letter-spacing:2.1px;-webkit-text-stroke:2.2px #FFFFFF;">ComplianceONE</div>
<div class="t" style="left:65.0px;top:308.8px;font-size:38px;color:#CFC8EE;letter-spacing:-0.9px;">Main Menu</div>
<div style="position:absolute;left:64px;top:365px;width:619px;height:120px;background:#EEF0FB;border-radius:60px;"></div>
<svg style="position:absolute;left:0px;top:0px;overflow:visible;" width="200" height="500" viewBox="0 0 200 500"><g fill="none" stroke="#6647D6" stroke-width="4" stroke-linecap="round" stroke-linejoin="round">
<rect x="111" y="402" width="18" height="18" rx="4"/>
<rect x="137" y="402" width="18" height="18" rx="4"/>
<rect x="111" y="427" width="18" height="18" rx="4"/>
<path d="M145.7 429.8 V442.6 M139.3 436.2 H152.1"/></g></svg>
<div class="t" style="left:193.0px;top:406.1px;font-size:40px;color:#6647D6;letter-spacing:-0.6px;">Dashboard</div>
<div class="t" style="left:193.0px;top:534.5px;font-size:40px;color:#E8EAF6;letter-spacing:-0.9px;">Work</div>
<svg style="position:absolute;left:100px;top:520px;overflow:visible;" width="70" height="70" viewBox="0 0 70 70"><g fill="none" stroke="#E8EAF6" stroke-width="3.8" stroke-linecap="round" stroke-linejoin="round"><path d="M33.3 10.8 L51 18.5 Q53.5 19.6 53.5 22.5 L53.5 32 Q53.5 47 33.3 55.5 Q13 47 13 32 L13 22.5 Q13 19.6 15.5 18.5 Z"/><circle cx="33.3" cy="29.5" r="4.4"/><path d="M33.3 34 V41.5"/></g></svg>
<svg style="position:absolute;left:0px;top:0px;overflow:visible;" width="3840" height="2160" viewBox="0 0 3840 2160"><path d="M585.5 547.35 L598.5 560.35 L611.5 547.35" fill="none" stroke="#D0CEDF" stroke-width="4.6" stroke-linecap="round" stroke-linejoin="round"/></svg>
<div class="t" style="left:193.0px;top:662.8px;font-size:40px;color:#E8EAF6;letter-spacing:-0.5px;">System Information</div>
<svg style="position:absolute;left:100px;top:648px;overflow:visible;" width="70" height="70" viewBox="0 0 70 70"><g fill="none" stroke="#E8EAF6" stroke-width="3.8" stroke-linecap="round" stroke-linejoin="round"><rect x="16.6" y="16" width="33.4" height="33" rx="8"/><rect x="22" y="21.5" width="22.7" height="22.5" rx="6"/><path d="M24.2 9.8 V16 M33.3 9.8 V16 M42 9.8 V16 M24.2 49 V55.5 M33.3 49 V55.5 M42 49 V55.5 M10.5 23.7 H16.6 M10.5 32.9 H16.6 M10.5 41.8 H16.6 M50 23.7 H56.5 M50 32.9 H56.5 M50 41.8 H56.5"/></g></svg>
<svg style="position:absolute;left:0px;top:0px;overflow:visible;" width="3840" height="2160" viewBox="0 0 3840 2160"><path d="M585.5 675.7 L598.5 688.7 L611.5 675.7" fill="none" stroke="#D0CEDF" stroke-width="4.6" stroke-linecap="round" stroke-linejoin="round"/></svg>
<div class="t" style="left:193.0px;top:791.2px;font-size:40px;color:#E8EAF6;letter-spacing:-1.4px;">AI Assessment</div>
<svg style="position:absolute;left:100px;top:776px;overflow:visible;" width="70" height="70" viewBox="0 0 70 70"><g fill="none" stroke="#E8EAF6" stroke-width="3.8" stroke-linecap="round" stroke-linejoin="round"><path d="M38.5 10.8 L22 10.8 Q11.3 10.8 11.3 21.5 L11.3 44 Q11.3 54.8 22 54.8 L44.5 54.8 Q55.3 54.8 55.3 44 L55.3 27.5 Z"/><path d="M38.5 10.8 L38.5 20.5 Q38.5 27.5 45.5 27.5 L55.3 27.5"/><path d="M22 35 H35.5 M22 44.2 H31.5"/></g><circle cx="14.5" cy="51.7" r="10.2" fill="#FFFFFF"/><circle cx="14.5" cy="51.7" r="7.4" fill="#F07A0B"/></svg>
<div class="t" style="left:193.0px;top:919.5px;font-size:40px;color:#E8EAF6;letter-spacing:-1.45px;">AI Reports</div>
<svg style="position:absolute;left:100px;top:904px;overflow:visible;" width="70" height="70" viewBox="0 0 70 70"><g fill="none" stroke="#E8EAF6" stroke-width="3.8" stroke-linecap="round" stroke-linejoin="round"><rect x="11.1" y="10.8" width="44.2" height="44.2" rx="12"/><rect x="21" y="31" width="8.5" height="16.5" rx="4.25"/><rect x="37" y="18.3" width="8.9" height="29.2" rx="4.45"/></g></svg>
<div class="t" style="left:193.0px;top:1047.9px;font-size:40px;color:#E8EAF6;letter-spacing:-0.9px;">Frameworks</div>
<svg style="position:absolute;left:100px;top:1032px;overflow:visible;" width="70" height="70" viewBox="0 0 70 70"><g fill="none" stroke="#E8EAF6" stroke-width="3.8" stroke-linecap="round" stroke-linejoin="round"><path d="M26 10.8 L40 10.8 Q52.4 10.8 52.4 22 Q52.4 24 49 26 Q47.3 27.5 47.3 30 L47.3 31.5 Q47.3 34 49.5 36 Q52.4 38.5 52.4 43 Q52.4 54.9 40 54.9 L26 54.9 Q14 54.9 14 43 L14 22 Q14 10.8 26 10.8 Z"/><path d="M26.3 12 V17.9 M33.1 12 V17.9 M39.9 12 V17.9"/><path d="M24.4 54.9 L24.4 48 Q24.4 44 28.4 44 L38 44 Q42 44 42 48 L42 54.9"/></g></svg>
<div class="t" style="left:193.0px;top:1176.2px;font-size:40px;color:#E8EAF6;letter-spacing:-0.2px;">Controls</div>
<svg style="position:absolute;left:100px;top:1160px;overflow:visible;" width="70" height="70" viewBox="0 0 70 70"><g fill="none" stroke="#E8EAF6" stroke-width="3.8" stroke-linecap="round" stroke-linejoin="round"><path d="M11.3 20.5 H21.7 M40.3 20.5 H55 M11.3 45.2 H25.6 M45 45.2 H55"/><circle cx="29" cy="20.5" r="7.3"/><circle cx="37.7" cy="45.2" r="7.3"/></g></svg>
<svg style="position:absolute;left:0px;top:0px;overflow:visible;" width="3840" height="2160" viewBox="0 0 3840 2160"><path d="M585.5 1189.1 L598.5 1202.1 L611.5 1189.1" fill="none" stroke="#D0CEDF" stroke-width="4.6" stroke-linecap="round" stroke-linejoin="round"/></svg>
<div class="t" style="left:193.0px;top:1304.6px;font-size:40px;color:#E8EAF6;letter-spacing:-2.0px;">Risks</div>
<svg style="position:absolute;left:100px;top:1288px;overflow:visible;" width="70" height="70" viewBox="0 0 70 70"><g fill="none" stroke="#E8EAF6" stroke-width="3.8" stroke-linecap="round" stroke-linejoin="round"><path d="M33.3 10.8 L51 18.5 Q53.5 19.6 53.5 22.5 L53.5 32 Q53.5 47 33.3 55.5 Q13 47 13 32 L13 22.5 Q13 19.6 15.5 18.5 Z"/><circle cx="33.3" cy="29.5" r="4.4"/><path d="M33.3 34 V41.5"/></g></svg>
<svg style="position:absolute;left:0px;top:0px;overflow:visible;" width="3840" height="2160" viewBox="0 0 3840 2160"><path d="M585.5 1317.4499999999998 L598.5 1330.4499999999998 L611.5 1317.4499999999998" fill="none" stroke="#D0CEDF" stroke-width="4.6" stroke-linecap="round" stroke-linejoin="round"/></svg>
<div class="t" style="left:193.0px;top:1432.9px;font-size:40px;color:#E8EAF6;letter-spacing:-1.35px;">AI ATO Documents</div>
<svg style="position:absolute;left:100px;top:1416px;overflow:visible;" width="70" height="70" viewBox="0 0 70 70"><g fill="none" stroke="#E8EAF6" stroke-width="3.8" stroke-linecap="round" stroke-linejoin="round"><rect x="13.5" y="10.9" width="39.6" height="44" rx="10"/><path d="M39.1 15.5 V20 Q39.1 25.7 44.8 25.7 H47.8"/><path d="M24.6 35 H33.8 M24.6 44.2 H42.5"/></g></svg>
<svg style="position:absolute;left:0px;top:0px;overflow:visible;" width="3840" height="2160" viewBox="0 0 3840 2160"><path d="M585.5 1445.8 L598.5 1458.8 L611.5 1445.8" fill="none" stroke="#D0CEDF" stroke-width="4.6" stroke-linecap="round" stroke-linejoin="round"/></svg>
<div class="t" style="left:193.0px;top:1561.3px;font-size:40px;color:#E8EAF6;letter-spacing:-0.1px;">Monitoring</div>
<svg style="position:absolute;left:100px;top:1544px;overflow:visible;" width="70" height="70" viewBox="0 0 70 70"><g fill="none" stroke="#E8EAF6" stroke-width="3.8" stroke-linecap="round" stroke-linejoin="round"><rect x="11.1" y="10.8" width="44.2" height="33.2" rx="9"/><path d="M11.1 34.8 H55.3 M33.3 44 V55 M22.7 55 H44"/></g></svg>
<svg style="position:absolute;left:0px;top:0px;overflow:visible;" width="3840" height="2160" viewBox="0 0 3840 2160"><path d="M585.5 1574.1499999999999 L598.5 1587.1499999999999 L611.5 1574.1499999999999" fill="none" stroke="#D0CEDF" stroke-width="4.6" stroke-linecap="round" stroke-linejoin="round"/></svg>
<div class="t" style="left:193.0px;top:1689.6px;font-size:40px;color:#E8EAF6;letter-spacing:-0.3px;">Integrations</div>
<svg style="position:absolute;left:100px;top:1672px;overflow:visible;" width="70" height="70" viewBox="0 0 70 70"><g fill="none" stroke="#E8EAF6" stroke-width="3.8" stroke-linecap="round" stroke-linejoin="round"><rect x="11" y="10.8" width="44.3" height="44.2" rx="12"/><circle cx="24.2" cy="24.2" r="4.4"/><circle cx="23.7" cy="42.5" r="4.4"/><circle cx="42.5" cy="42.5" r="4.4"/><path d="M24.1 28.6 V38.1 M24.1 33.5 H34 Q37 33.5 39.3 37.5"/></g></svg>
<div class="t" style="left:193.0px;top:1818.0px;font-size:40px;color:#E8EAF6;letter-spacing:-0.55px;">Audits</div>
<svg style="position:absolute;left:100px;top:1800px;overflow:visible;" width="70" height="70" viewBox="0 0 70 70"><g fill="none" stroke="#E8EAF6" stroke-width="3.8" stroke-linecap="round" stroke-linejoin="round"><path d="M38.5 10.8 L22 10.8 Q11.3 10.8 11.3 21.5 L11.3 44 Q11.3 54.8 22 54.8 L44.5 54.8 Q55.3 54.8 55.3 44 L55.3 27.5 Z"/><path d="M38.5 10.8 L38.5 20.5 Q38.5 27.5 45.5 27.5 L55.3 27.5"/><path d="M22 35 H35.5 M22 44.2 H31.5"/></g></svg>
<div style="position:absolute;left:0px;top:1954px;width:747px;height:3px;background:#9A78F0;"></div>
<div class="t" style="left:193.0px;top:2061.1px;font-size:40px;color:#E8EAF6;letter-spacing:-0.55px;">Security Settings</div>
<svg style="position:absolute;left:100px;top:2045px;overflow:visible;" width="70" height="70" viewBox="0 0 70 70"><g fill="none" stroke="#E8EAF6" stroke-width="3.8" stroke-linecap="round" stroke-linejoin="round"><path d="M33.3 10.8 L51 18.5 Q53.5 19.6 53.5 22.5 L53.5 32 Q53.5 47 33.3 55.5 Q13 47 13 32 L13 22.5 Q13 19.6 15.5 18.5 Z"/><circle cx="33.3" cy="29.5" r="4.4"/><path d="M33.3 34 V41.5"/></g></svg>
<svg style="position:absolute;left:0px;top:0px;overflow:visible;" width="3840" height="2160" viewBox="0 0 3840 2160"><path d="M585.5 2074 L598.5 2087 L611.5 2074" fill="none" stroke="#D0CEDF" stroke-width="4.6" stroke-linecap="round" stroke-linejoin="round"/></svg>
<div style="position:absolute;left:747px;top:0;width:170px;height:2160px;background:linear-gradient(90deg,rgba(70,80,120,0.045),rgba(70,80,120,0));"></div>
</div></body></html>
